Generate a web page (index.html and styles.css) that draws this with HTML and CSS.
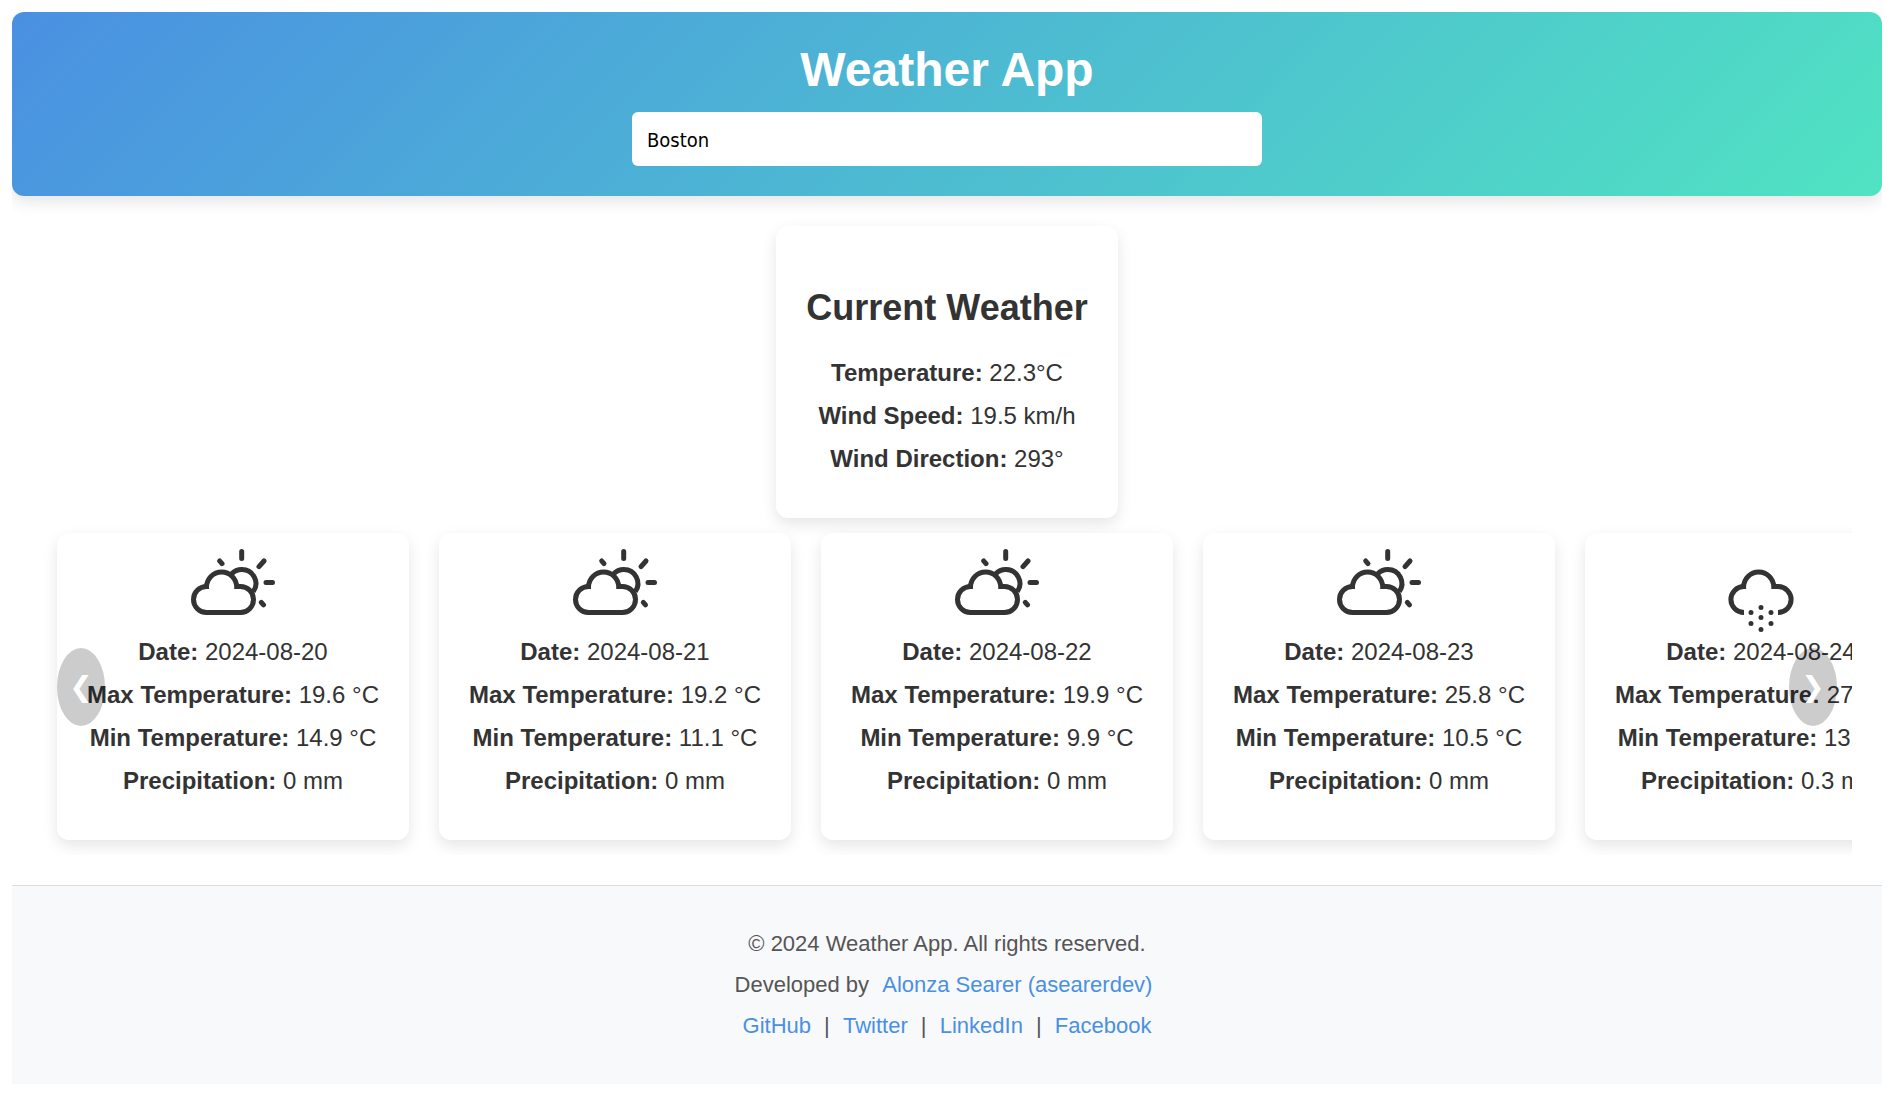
FILE: index.html
```
<!DOCTYPE html>
<html lang="en">
<head>
<meta charset="utf-8">
<title>Weather App</title>
<link rel="stylesheet" href="styles.css">
</head>
<body>
<svg class="sprite" aria-hidden="true">
  <symbol id="day-cloudy" viewBox="0 0 90 90">
    <path d="M20.5 38.5H18.5A13 13 0 0 0 18.5 64.5H52.5A13 13 0 0 0 52.5 38.5H47M48.7 41V39.2A15.1 15.1 0 0 0 18.5 39.2V41"/>
    <path d="M43.5 26A14 14 0 0 1 53.9 21.5A14 14 0 0 1 65.3 43.6"/>
    <path class="ray" d="M53.7 3.5V10.5M78 34.5H84.5M71 18.7L76 13M31.7 13L34 15.7M73.3 54.3L75.5 56.8"/>
  </symbol>
  <symbol id="snow-cloud" viewBox="0 0 90 90">
    <path d="M28 64.5A13 13 0 0 1 27.8 38.5H29.5M27.6 41V39.2A15.1 15.1 0 0 1 57.8 39.2V41M56 38.5H62.2A13 13 0 0 1 62 64.5"/>
    <path class="dots" d="M35 64.5h0M45 59.5h0M55 64.5h0M45 69.5h0M35 75.5h0M55 75.5h0M45 81.5h0"/>
  </symbol>
</svg>
<header class="header">
  <h1>Weather App</h1>
  <input class="search" type="text" value="Boston" aria-label="City">
</header>
<main class="main">
  <section class="card current">
    <h2>Current Weather</h2>
    <p><strong>Temperature:</strong> 22.3°C</p>
    <p><strong>Wind Speed:</strong> 19.5 km/h</p>
    <p><strong>Wind Direction:</strong> 293°</p>
  </section>
  <section class="carousel" aria-label="Forecast">
    <div class="track">
      <article class="card day">
        <svg class="icon"><use href="#day-cloudy"/></svg>
        <p><strong>Date:</strong> 2024-08-20</p>
        <p><strong>Max Temperature:</strong> 19.6 °C</p>
        <p><strong>Min Temperature:</strong> 14.9 °C</p>
        <p><strong>Precipitation:</strong> 0 mm</p>
      </article>
      <article class="card day">
        <svg class="icon"><use href="#day-cloudy"/></svg>
        <p><strong>Date:</strong> 2024-08-21</p>
        <p><strong>Max Temperature:</strong> 19.2 °C</p>
        <p><strong>Min Temperature:</strong> 11.1 °C</p>
        <p><strong>Precipitation:</strong> 0 mm</p>
      </article>
      <article class="card day">
        <svg class="icon"><use href="#day-cloudy"/></svg>
        <p><strong>Date:</strong> 2024-08-22</p>
        <p><strong>Max Temperature:</strong> 19.9 °C</p>
        <p><strong>Min Temperature:</strong> 9.9 °C</p>
        <p><strong>Precipitation:</strong> 0 mm</p>
      </article>
      <article class="card day">
        <svg class="icon"><use href="#day-cloudy"/></svg>
        <p><strong>Date:</strong> 2024-08-23</p>
        <p><strong>Max Temperature:</strong> 25.8 °C</p>
        <p><strong>Min Temperature:</strong> 10.5 °C</p>
        <p><strong>Precipitation:</strong> 0 mm</p>
      </article>
      <article class="card day">
        <svg class="icon"><use href="#snow-cloud"/></svg>
        <p><strong>Date:</strong> 2024-08-24</p>
        <p><strong>Max Temperature:</strong> 27.0 °C</p>
        <p><strong>Min Temperature:</strong> 13.0 °C</p>
        <p><strong>Precipitation:</strong> 0.3 mm</p>
      </article>
    </div>
    <button class="arrow prev" type="button" aria-label="Previous days">❮</button>
    <button class="arrow next" type="button" aria-label="Next days">❯</button>
  </section>
</main>
<footer class="footer">
  <p>© 2024 Weather App. All rights reserved.</p>
  <p>Developed by <a href="#">Alonza Searer (asearerdev)</a></p>
  <p><a href="#">GitHub</a> | <a href="#">Twitter</a> | <a href="#">LinkedIn</a> | <a href="#">Facebook</a></p>
</footer>
</body>
</html>
```
FILE: styles.css
```
* {
  box-sizing: border-box;
}

body {
  margin: 12px;
  background: #fff;
  color: #333;
  font-family: "Liberation Sans", Arial, sans-serif;
  font-size: 24px;
  line-height: 28px;
}

h1, h2, p {
  margin: 0;
}

.sprite {
  display: none;
}

.header {
  display: flex;
  flex-direction: column;
  align-items: center;
  gap: 15px;
  padding: 30px;
  border-radius: 12px;
  background: linear-gradient(135deg, #4a90e2, #50e3c2);
  box-shadow: 0 6px 15px rgba(0, 0, 0, 0.1);
  color: #fff;
}

.header h1 {
  font-size: 48px;
  line-height: 55px;
}

.search {
  width: 100%;
  max-width: 630px;
  height: 54px;
  padding: 16px 15px 14px;
  border: 0;
  border-radius: 6px;
  background: #fff;
  color: #000;
  font-family: "DejaVu Sans Condensed", "DejaVu Sans", sans-serif;
  font-size: 20px;
}

.main {
  display: flex;
  flex-direction: column;
  align-items: center;
  padding: 30px;
}

.card {
  display: flex;
  flex-direction: column;
  align-items: center;
  gap: 15px;
  padding: 30px 30px 45px;
  border-radius: 12px;
  background: #fff;
  box-shadow: 0 6px 15px rgba(0, 0, 0, 0.1);
  white-space: nowrap;
}

.current h2 {
  padding: 30px 0 15px;
  font-size: 36px;
  line-height: 43px;
}

.carousel {
  position: relative;
  align-self: stretch;
  overflow: hidden;
}

.track {
  display: flex;
  gap: 30px;
  padding: 15px;
}

.day {
  flex: 0 0 352px;
  padding-top: 15px;
}

.icon {
  width: 90px;
  height: 90px;
  margin-bottom: -15px;
  fill: none;
  stroke: #333;
  stroke-width: 5px;
}

.ray, .dots {
  stroke-linecap: round;
}

.arrow {
  position: absolute;
  top: 50%;
  width: 48px;
  height: 78px;
  padding: 0;
  transform: translateY(-50%);
  border: 0;
  border-radius: 50%;
  background: rgba(0, 0, 0, 0.2);
  color: #fff;
  font-family: "DejaVu Sans", sans-serif;
  font-size: 28px;
  line-height: 78px;
}

.prev {
  left: 15px;
}

.next {
  right: 15px;
}

.footer {
  display: flex;
  flex-direction: column;
  align-items: center;
  gap: 15px;
  padding: 45px 30px;
  border-top: 1px solid #ddd;
  background: #f8f9fb;
  color: #555;
  font-size: 22px;
  line-height: 26px;
}

.footer a {
  margin: 0 7px;
  color: #4a90e2;
  text-decoration: none;
}
```
